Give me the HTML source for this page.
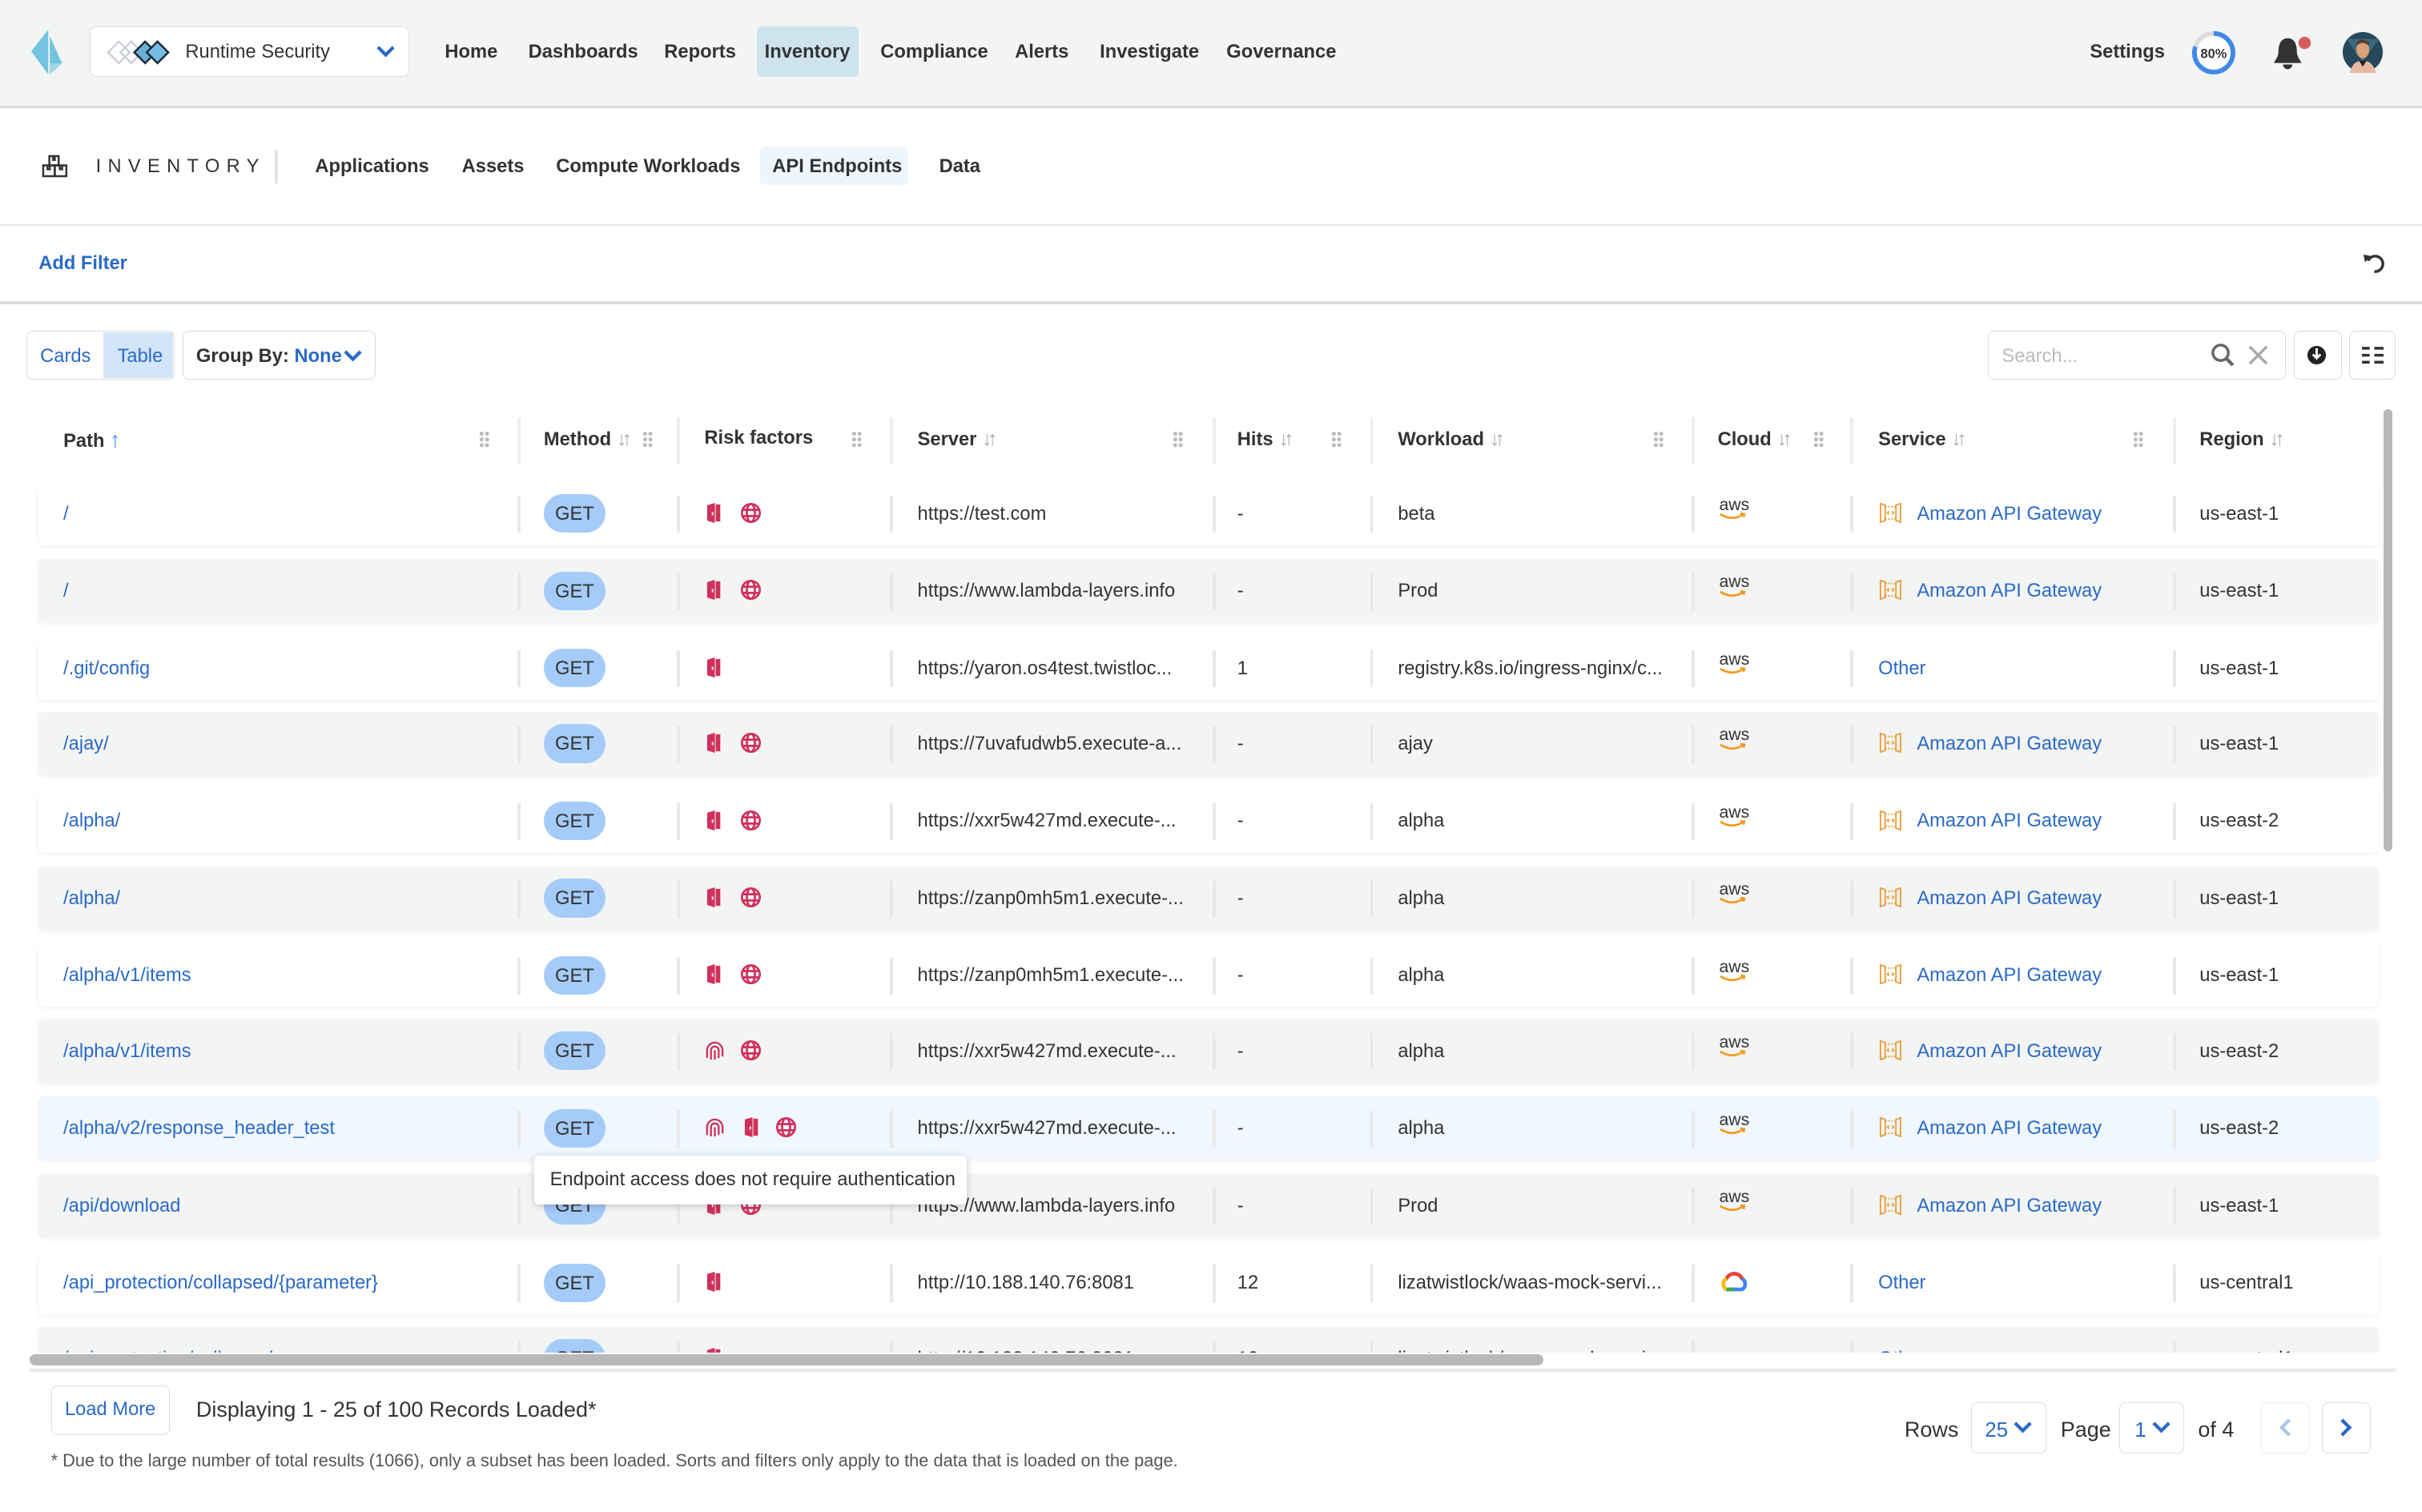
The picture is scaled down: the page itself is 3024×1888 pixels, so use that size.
<!DOCTYPE html>
<html><head><meta charset="utf-8">
<style>
html{zoom:1.92857}
*{box-sizing:border-box;margin:0;padding:0}
body{width:1568px;height:979px;overflow:hidden;background:#fff;font-family:"Liberation Sans",sans-serif;color:#333;font-size:13px;position:relative}
.a{position:absolute}
.top{left:0;top:0;width:1568px;height:70px;background:#f3f5f4;border-bottom:2px solid #dcdcdc}
.nav{top:27px;font-size:12.3px;font-weight:bold;color:#333}
.blue{color:#2a6ac7}
.hb{top:145px;left:0;width:1568px;height:1px;background:#e6e6e6}
.btn{border:1px solid #ddd;border-radius:4px;background:#fff}
.hdr{font-weight:bold;font-size:12.3px;top:277px}
.sort{color:#aaa;font-size:13px;font-weight:normal;letter-spacing:-3px}
.grip{width:7px;height:11px;background:radial-gradient(circle,#bbb 1.2px,transparent 1.4px) 0 0/3.5px 3.7px}
.hsep{width:2px;height:30px;background:#eee;top:270px}
.row{position:absolute;left:25px;width:1515px;height:41px;background:#fff;border-radius:3px;box-shadow:0 1px 3px rgba(0,0,0,.06)}
.row.g{background:#f3f4f4}
.row.h{background:#f0f7fe}
.row span{position:absolute;top:14px;font-size:12.3px;white-space:nowrap}
.row i{position:absolute;top:9px;width:2px;height:24px;background:#e8e8e8}
.get{position:absolute;left:327px;top:8px;width:40px;height:25px;border-radius:13px;background:#a5cbf9;font-size:12.3px;text-align:center;line-height:26px;color:#333}
.ic{position:absolute;top:13px}
.aws{position:absolute;left:1088px;top:10px;font-size:11px;line-height:10px;color:#333}
</style></head><body>
<svg width="0" height="0" style="position:absolute">
<defs>
<symbol id="door" viewBox="0 0 10 14"><path d="M1 2 L6 0.5 V13.5 L1 12 Z" fill="#d0315c"/><path d="M6.5 1.5 H9.5 V12.5 H6.5" fill="#d0315c"/><rect x="4" y="6.5" width="1" height="2" fill="#fff"/></symbol>
<symbol id="globe" viewBox="0 0 14 14"><g fill="none" stroke="#d0315c" stroke-width="1.4"><circle cx="7" cy="7" r="5.8"/><ellipse cx="7" cy="7" rx="2.6" ry="5.8"/><path d="M1.2 5 H12.8 M1.2 9 H12.8"/></g></symbol>
<symbol id="fp" viewBox="0 0 14 14"><g fill="none" stroke="#d0315c" stroke-width="1.2"><path d="M2 12 V7 a5 5 0 0 1 10 0 V11"/><path d="M4.5 13 V7 a2.5 2.5 0 0 1 5 0 V12"/><path d="M7 7 V13"/></g></symbol>
<symbol id="apg" viewBox="0 0 16 16"><g fill="none" stroke="#e8a140" stroke-width="1"><path d="M1.5 2 L4.5 3 V13 L1.5 14 Z M14.5 2 L11.5 3 V13 L14.5 14 Z"/><path d="M4.5 4 H11.5 M4.5 12 H11.5" stroke-dasharray="1 1"/><path d="M7 7 L6 8 L7 9 M9 7 L10 8 L9 9"/></g></symbol>
<symbol id="awsl" viewBox="0 0 18 5"><path d="M1 1 Q9 6 16 1 M14 0.5 L16.5 1 L16 3" fill="none" stroke="#f39a1f" stroke-width="1.4"/></symbol>
</defs></svg>

<div class="a top"></div>
<svg class="a" style="left:20px;top:19px" width="26" height="30" viewBox="0 0 26 30"><path d="M11 0 L0 14 L11 29 Z" fill="#72c4e0"/><path d="M12 4 L20 22 L12 22 Z" fill="#72c4e0"/><path d="M12 22 L20 22 L12 29Z" fill="#9fd6ea"/></svg>
<div class="a btn" style="left:58px;top:17px;width:207px;height:33px"></div>
<svg class="a" style="left:69px;top:25px" width="48" height="18" viewBox="0 0 48 18"><g fill="none" stroke="#c9ced6" stroke-width="1.2"><path d="M8 2 L15 9 L8 16 L1 9Z"/><path d="M16 2 L23 9 L16 16 L9 9Z"/></g><path d="M25 2 L32 9 L25 16 L18 9Z" fill="#6ab0d6" stroke="#1d2b36" stroke-width="1.3"/><path d="M33 2 L40 9 L33 16 L26 9Z" fill="#73bde3" stroke="#1d2b36" stroke-width="1.3"/></svg>
<div class="a" style="left:120px;top:27px;font-size:12.3px">Runtime Security</div>
<svg class="a" style="left:243px;top:29px" width="13" height="9" viewBox="0 0 13 9"><path d="M1.5 1.5 L6.5 6.5 L11.5 1.5" fill="none" stroke="#2a6ac7" stroke-width="2.2"/></svg>
<div class="a nav" style="left:288px">Home</div>
<div class="a nav" style="left:342px">Dashboards</div>
<div class="a nav" style="left:430px">Reports</div>
<div class="a" style="left:490px;top:17px;width:66px;height:33px;background:#cde4ef;border-radius:3px"></div>
<div class="a nav" style="left:495px">Inventory</div>
<div class="a nav" style="left:570px">Compliance</div>
<div class="a nav" style="left:657px">Alerts</div>
<div class="a nav" style="left:712px">Investigate</div>
<div class="a nav" style="left:794px">Governance</div>
<div class="a nav" style="left:1353px">Settings</div>
<svg class="a" style="left:1418px;top:19px" width="30" height="30" viewBox="0 0 30 30"><circle cx="15" cy="15" r="12.5" fill="#fff" stroke="#ddd" stroke-width="3"/><circle cx="15" cy="15" r="12.5" fill="none" stroke="#3f8ae8" stroke-width="3" stroke-dasharray="62.8 78.5" transform="rotate(-90 15 15)"/><text x="15" y="18.5" text-anchor="middle" font-size="8.5" font-weight="bold" font-family="Liberation Sans" fill="#333">80%</text></svg>
<svg class="a" style="left:1471px;top:22px" width="28" height="25" viewBox="0 0 28 25"><path d="M10 3 C5 3 4 8 4 12 C4 15 2 17 1 19 H19 C18 17 16 15 16 12 C16 8 15 3 10 3Z" fill="#333"/><path d="M7 20 H13 A3 3 0 0 1 7 20Z" fill="#333"/><circle cx="21" cy="6" r="4" fill="#d65c5c"/></svg>
<svg class="a" style="left:1516px;top:20px" width="27" height="27" viewBox="0 0 27 27"><circle cx="13.5" cy="13.5" r="13" fill="#27475a"/><path d="M3 5 L13.5 20 L24 5Z" fill="#3a6a80"/><ellipse cx="13.5" cy="12" rx="4.2" ry="5.5" fill="#d9a07a"/><path d="M9 8 Q13 3 18 8 L17 9 Q13 6 10 9Z" fill="#5a3a2a"/><path d="M5 27 Q7 19 13.5 19 Q20 19 22 27Z" fill="#e8b9a0"/><path d="M11 19 L13.5 23 L16 19Z" fill="#222"/></svg>

<svg class="a" style="left:27px;top:100px" width="17" height="15" viewBox="0 0 17 15"><g fill="none" stroke="#333" stroke-width="1.3"><rect x="5" y="1" width="6" height="6"/><rect x="1" y="7" width="7.5" height="7"/><rect x="8.5" y="7" width="7.5" height="7"/><path d="M7.5 1 V3.5 H8.5 V1 M3.8 7 V9.5 H5.3 V7 M11.8 7 V9.5 H13.3 V7"/></g></svg>
<div class="a" style="left:62px;top:101px;font-size:12.3px;letter-spacing:4.3px;color:#333">INVENTORY</div>
<div class="a" style="left:178px;top:97px;width:2px;height:22px;background:#e3e3e3"></div>
<div class="a nav" style="left:204px;top:101px">Applications</div>
<div class="a nav" style="left:299px;top:101px">Assets</div>
<div class="a nav" style="left:360px;top:101px">Compute Workloads</div>
<div class="a" style="left:492px;top:95px;width:96px;height:25px;background:#eef6fd;border-radius:3px"></div>
<div class="a nav" style="left:500px;top:101px">API Endpoints</div>
<div class="a nav" style="left:608px;top:101px">Data</div>
<div class="a hb"></div>
<div class="a" style="left:25px;top:164px;font-weight:bold;font-size:12.3px;color:#2a6ac7">Add Filter</div>
<svg class="a" style="left:1529px;top:163px" width="16" height="16" viewBox="0 0 16 16"><path d="M4 6 A5 5 0 1 1 8 13" fill="none" stroke="#333" stroke-width="1.8"/><path d="M1 2 L6 3 L2 7Z" fill="#333"/></svg>
<div class="a" style="left:0;top:195px;width:1568px;height:2px;background:#ddd"></div>

<div class="a btn" style="left:17px;top:214px;width:96px;height:32px"></div>
<div class="a" style="left:67px;top:215px;width:45px;height:30px;background:#d3e5f8"></div>
<div class="a" style="left:26px;top:224px;color:#2a6ac7;font-size:12.3px">Cards</div>
<div class="a" style="left:76px;top:224px;color:#2a6ac7;font-size:12.3px">Table</div>
<div class="a btn" style="left:118px;top:214px;width:125px;height:32px"></div>
<div class="a" style="left:127px;top:224px;font-size:12.3px;font-weight:bold">Group By: <span class="blue">None</span></div>
<svg class="a" style="left:222px;top:226px" width="13" height="9" viewBox="0 0 13 9"><path d="M1.5 1.5 L6.5 6.5 L11.5 1.5" fill="none" stroke="#2a6ac7" stroke-width="2.2"/></svg>
<div class="a btn" style="left:1287px;top:214px;width:193px;height:32px"></div>
<div class="a" style="left:1296px;top:224px;color:#bbb;font-size:12.3px">Search...</div>
<svg class="a" style="left:1431px;top:222px" width="16" height="16" viewBox="0 0 16 16"><circle cx="6.5" cy="6.5" r="5" fill="none" stroke="#666" stroke-width="1.8"/><path d="M10 10 L14.5 14.5" stroke="#666" stroke-width="2.2"/></svg>
<svg class="a" style="left:1455px;top:223px" width="14" height="14" viewBox="0 0 14 14"><path d="M1.5 1.5 L12.5 12.5 M12.5 1.5 L1.5 12.5" stroke="#aaa" stroke-width="1.8"/></svg>
<div class="a btn" style="left:1485px;top:214px;width:31px;height:32px"></div>
<svg class="a" style="left:1493px;top:223px" width="14" height="14" viewBox="0 0 14 14"><circle cx="7" cy="7" r="6" fill="#222"/><path d="M7 2.5 V8.5 M4.5 6.5 L7 9 L9.5 6.5" stroke="#fff" stroke-width="1.5" fill="none"/></svg>
<div class="a btn" style="left:1521px;top:214px;width:30px;height:32px"></div>
<svg class="a" style="left:1529px;top:224px" width="14" height="12" viewBox="0 0 14 12"><path d="M0 1.5 H5 M8 1.5 H14 M0 6 H5 M8 6 H14 M0 10.5 H5 M8 10.5 H14" stroke="#333" stroke-width="1.8"/></svg>

<div class="a" style="left:0;top:262px;width:1545px;height:614px;overflow:hidden">
<div class="a" style="left:0;top:-262px;width:1545px;height:979px">
<div class="a hdr" style="left:41px">Path <span style="color:#4a90e2;font-size:14px">&#8593;</span></div>
<div class="a grip" style="left:310px;top:279px"></div><div class="a hsep" style="left:335px"></div>
<div class="a hdr" style="left:352px">Method <span class="sort">&#8595;&#8593;</span></div>
<div class="a grip" style="left:416px;top:279px"></div><div class="a hsep" style="left:438px"></div>
<div class="a hdr" style="left:456px">Risk factors</div>
<div class="a grip" style="left:551px;top:279px"></div><div class="a hsep" style="left:576px"></div>
<div class="a hdr" style="left:594px">Server <span class="sort">&#8595;&#8593;</span></div>
<div class="a grip" style="left:759px;top:279px"></div><div class="a hsep" style="left:785px"></div>
<div class="a hdr" style="left:801px">Hits <span class="sort">&#8595;&#8593;</span></div>
<div class="a grip" style="left:862px;top:279px"></div><div class="a hsep" style="left:887px"></div>
<div class="a hdr" style="left:905px">Workload <span class="sort">&#8595;&#8593;</span></div>
<div class="a grip" style="left:1070px;top:279px"></div><div class="a hsep" style="left:1095px"></div>
<div class="a hdr" style="left:1112px">Cloud <span class="sort">&#8595;&#8593;</span></div>
<div class="a grip" style="left:1174px;top:279px"></div><div class="a hsep" style="left:1198px"></div>
<div class="a hdr" style="left:1216px">Service <span class="sort">&#8595;&#8593;</span></div>
<div class="a grip" style="left:1381px;top:279px"></div><div class="a hsep" style="left:1407px"></div>
<div class="a hdr" style="left:1424px">Region <span class="sort">&#8595;&#8593;</span></div>

<div class="row" style="top:312px"><span class="blue" style="left:16px">/</span><i style="left:310px"></i><div class="get">GET</div><i style="left:413px"></i><svg class="ic" style="left:432px" width="10" height="14"><use href="#door"/></svg><svg class="ic" style="left:454px" width="14" height="14"><use href="#globe"/></svg><i style="left:551px"></i><span style="left:569px">https://test.com</span><i style="left:760px"></i><span style="left:776px">-</span><i style="left:862px"></i><span style="left:880px">beta</span><i style="left:1070px"></i><div class="aws">aws<svg width="18" height="5" style="display:block"><use href="#awsl"/></svg></div><i style="left:1173px"></i><svg class="ic" style="left:1191px;top:12px" width="16" height="16"><use href="#apg"/></svg><span class="blue" style="left:1216px">Amazon API Gateway</span><i style="left:1382px"></i><span style="left:1399px">us-east-1</span></div>

<div class="row g" style="top:362px"><span class="blue" style="left:16px">/</span><i style="left:310px"></i><div class="get">GET</div><i style="left:413px"></i><svg class="ic" style="left:432px" width="10" height="14"><use href="#door"/></svg><svg class="ic" style="left:454px" width="14" height="14"><use href="#globe"/></svg><i style="left:551px"></i><span style="left:569px">https://www.lambda-layers.info</span><i style="left:760px"></i><span style="left:776px">-</span><i style="left:862px"></i><span style="left:880px">Prod</span><i style="left:1070px"></i><div class="aws">aws<svg width="18" height="5" style="display:block"><use href="#awsl"/></svg></div><i style="left:1173px"></i><svg class="ic" style="left:1191px;top:12px" width="16" height="16"><use href="#apg"/></svg><span class="blue" style="left:1216px">Amazon API Gateway</span><i style="left:1382px"></i><span style="left:1399px">us-east-1</span></div>

<div class="row" style="top:412px"><span class="blue" style="left:16px">/.git/config</span><i style="left:310px"></i><div class="get">GET</div><i style="left:413px"></i><svg class="ic" style="left:432px" width="10" height="14"><use href="#door"/></svg><i style="left:551px"></i><span style="left:569px">https://yaron.os4test.twistloc...</span><i style="left:760px"></i><span style="left:776px">1</span><i style="left:862px"></i><span style="left:880px">registry.k8s.io/ingress-nginx/c...</span><i style="left:1070px"></i><div class="aws">aws<svg width="18" height="5" style="display:block"><use href="#awsl"/></svg></div><i style="left:1173px"></i><span class="blue" style="left:1191px">Other</span><i style="left:1382px"></i><span style="left:1399px">us-east-1</span></div>

<div class="row g" style="top:461px"><span class="blue" style="left:16px">/ajay/</span><i style="left:310px"></i><div class="get">GET</div><i style="left:413px"></i><svg class="ic" style="left:432px" width="10" height="14"><use href="#door"/></svg><svg class="ic" style="left:454px" width="14" height="14"><use href="#globe"/></svg><i style="left:551px"></i><span style="left:569px">https://7uvafudwb5.execute-a...</span><i style="left:760px"></i><span style="left:776px">-</span><i style="left:862px"></i><span style="left:880px">ajay</span><i style="left:1070px"></i><div class="aws">aws<svg width="18" height="5" style="display:block"><use href="#awsl"/></svg></div><i style="left:1173px"></i><svg class="ic" style="left:1191px;top:12px" width="16" height="16"><use href="#apg"/></svg><span class="blue" style="left:1216px">Amazon API Gateway</span><i style="left:1382px"></i><span style="left:1399px">us-east-1</span></div>

<div class="row" style="top:511px"><span class="blue" style="left:16px">/alpha/</span><i style="left:310px"></i><div class="get">GET</div><i style="left:413px"></i><svg class="ic" style="left:432px" width="10" height="14"><use href="#door"/></svg><svg class="ic" style="left:454px" width="14" height="14"><use href="#globe"/></svg><i style="left:551px"></i><span style="left:569px">https://xxr5w427md.execute-...</span><i style="left:760px"></i><span style="left:776px">-</span><i style="left:862px"></i><span style="left:880px">alpha</span><i style="left:1070px"></i><div class="aws">aws<svg width="18" height="5" style="display:block"><use href="#awsl"/></svg></div><i style="left:1173px"></i><svg class="ic" style="left:1191px;top:12px" width="16" height="16"><use href="#apg"/></svg><span class="blue" style="left:1216px">Amazon API Gateway</span><i style="left:1382px"></i><span style="left:1399px">us-east-2</span></div>

<div class="row g" style="top:561px"><span class="blue" style="left:16px">/alpha/</span><i style="left:310px"></i><div class="get">GET</div><i style="left:413px"></i><svg class="ic" style="left:432px" width="10" height="14"><use href="#door"/></svg><svg class="ic" style="left:454px" width="14" height="14"><use href="#globe"/></svg><i style="left:551px"></i><span style="left:569px">https://zanp0mh5m1.execute-...</span><i style="left:760px"></i><span style="left:776px">-</span><i style="left:862px"></i><span style="left:880px">alpha</span><i style="left:1070px"></i><div class="aws">aws<svg width="18" height="5" style="display:block"><use href="#awsl"/></svg></div><i style="left:1173px"></i><svg class="ic" style="left:1191px;top:12px" width="16" height="16"><use href="#apg"/></svg><span class="blue" style="left:1216px">Amazon API Gateway</span><i style="left:1382px"></i><span style="left:1399px">us-east-1</span></div>

<div class="row" style="top:611px"><span class="blue" style="left:16px">/alpha/v1/items</span><i style="left:310px"></i><div class="get">GET</div><i style="left:413px"></i><svg class="ic" style="left:432px" width="10" height="14"><use href="#door"/></svg><svg class="ic" style="left:454px" width="14" height="14"><use href="#globe"/></svg><i style="left:551px"></i><span style="left:569px">https://zanp0mh5m1.execute-...</span><i style="left:760px"></i><span style="left:776px">-</span><i style="left:862px"></i><span style="left:880px">alpha</span><i style="left:1070px"></i><div class="aws">aws<svg width="18" height="5" style="display:block"><use href="#awsl"/></svg></div><i style="left:1173px"></i><svg class="ic" style="left:1191px;top:12px" width="16" height="16"><use href="#apg"/></svg><span class="blue" style="left:1216px">Amazon API Gateway</span><i style="left:1382px"></i><span style="left:1399px">us-east-1</span></div>

<div class="row g" style="top:660px"><span class="blue" style="left:16px">/alpha/v1/items</span><i style="left:310px"></i><div class="get">GET</div><i style="left:413px"></i><svg class="ic" style="left:431px" width="14" height="14"><use href="#fp"/></svg><svg class="ic" style="left:454px" width="14" height="14"><use href="#globe"/></svg><i style="left:551px"></i><span style="left:569px">https://xxr5w427md.execute-...</span><i style="left:760px"></i><span style="left:776px">-</span><i style="left:862px"></i><span style="left:880px">alpha</span><i style="left:1070px"></i><div class="aws">aws<svg width="18" height="5" style="display:block"><use href="#awsl"/></svg></div><i style="left:1173px"></i><svg class="ic" style="left:1191px;top:12px" width="16" height="16"><use href="#apg"/></svg><span class="blue" style="left:1216px">Amazon API Gateway</span><i style="left:1382px"></i><span style="left:1399px">us-east-2</span></div>

<div class="row h" style="top:710px"><span class="blue" style="left:16px">/alpha/v2/response_header_test</span><i style="left:310px"></i><div class="get">GET</div><i style="left:413px"></i><svg class="ic" style="left:431px" width="14" height="14"><use href="#fp"/></svg><svg class="ic" style="left:456px" width="10" height="14"><use href="#door"/></svg><svg class="ic" style="left:477px" width="14" height="14"><use href="#globe"/></svg><i style="left:551px"></i><span style="left:569px">https://xxr5w427md.execute-...</span><i style="left:760px"></i><span style="left:776px">-</span><i style="left:862px"></i><span style="left:880px">alpha</span><i style="left:1070px"></i><div class="aws">aws<svg width="18" height="5" style="display:block"><use href="#awsl"/></svg></div><i style="left:1173px"></i><svg class="ic" style="left:1191px;top:12px" width="16" height="16"><use href="#apg"/></svg><span class="blue" style="left:1216px">Amazon API Gateway</span><i style="left:1382px"></i><span style="left:1399px">us-east-2</span></div>

<div class="row g" style="top:760px"><span class="blue" style="left:16px">/api/download</span><i style="left:310px"></i><div class="get">GET</div><i style="left:413px"></i><svg class="ic" style="left:432px" width="10" height="14"><use href="#door"/></svg><svg class="ic" style="left:454px" width="14" height="14"><use href="#globe"/></svg><i style="left:551px"></i><span style="left:569px">https://www.lambda-layers.info</span><i style="left:760px"></i><span style="left:776px">-</span><i style="left:862px"></i><span style="left:880px">Prod</span><i style="left:1070px"></i><div class="aws">aws<svg width="18" height="5" style="display:block"><use href="#awsl"/></svg></div><i style="left:1173px"></i><svg class="ic" style="left:1191px;top:12px" width="16" height="16"><use href="#apg"/></svg><span class="blue" style="left:1216px">Amazon API Gateway</span><i style="left:1382px"></i><span style="left:1399px">us-east-1</span></div>

<div class="row" style="top:810px"><span class="blue" style="left:16px">/api_protection/collapsed/{parameter}</span><i style="left:310px"></i><div class="get">GET</div><i style="left:413px"></i><svg class="ic" style="left:432px" width="10" height="14"><use href="#door"/></svg><i style="left:551px"></i><span style="left:569px">http://10.188.140.76:8081</span><i style="left:760px"></i><span style="left:776px">12</span><i style="left:862px"></i><span style="left:880px">lizatwistlock/waas-mock-servi...</span><i style="left:1070px"></i><svg class="ic" style="left:1089px;top:12px" width="18" height="16" viewBox="0 0 18 16"><path d="M4 13 A4 4 0 0 1 4 6 A5.5 5.5 0 0 1 14 6 A4 4 0 0 1 14 13 Z" fill="none" stroke="#4285f4" stroke-width="2.4"/><path d="M4 6 A5.5 5.5 0 0 1 14 6" fill="none" stroke="#ea4335" stroke-width="2.4"/><path d="M4 13 A4 4 0 0 1 4 6" fill="none" stroke="#fbbc05" stroke-width="2.4"/><path d="M4 13 H9" stroke="#34a853" stroke-width="2.4"/></svg><i style="left:1173px"></i><span class="blue" style="left:1191px">Other</span><i style="left:1382px"></i><span style="left:1399px">us-central1</span></div>

<div class="row g" style="top:859px"><span class="blue" style="left:16px">/api_protection/collapsed</span><i style="left:310px"></i><div class="get">GET</div><i style="left:413px"></i><svg class="ic" style="left:432px" width="10" height="14"><use href="#door"/></svg><i style="left:551px"></i><span style="left:569px">http://10.188.140.76:8081</span><i style="left:760px"></i><span style="left:776px">12</span><i style="left:862px"></i><span style="left:880px">lizatwistlock/waas-mock-servi...</span><i style="left:1070px"></i><i style="left:1173px"></i><span class="blue" style="left:1191px">Other</span><i style="left:1382px"></i><span style="left:1399px">us-central1</span></div>
</div>
</div>

<div class="a" style="left:346px;top:748px;width:280px;height:32px;background:#fff;border-radius:3px;box-shadow:0 1px 5px rgba(0,0,0,.2);font-size:12.3px;padding:9px 0 0 10px;white-space:nowrap">Endpoint access does not require authentication</div>

<div class="a" style="left:1543px;top:265px;width:6px;height:286px;background:#b8b8b8;border-radius:3px"></div>
<div class="a" style="left:19px;top:877px;width:980px;height:7px;background:#b8b8b8;border-radius:4px"></div>
<div class="a" style="left:19px;top:886px;width:1532px;height:2px;background:#e8e8e8"></div>

<div class="a btn" style="left:33px;top:897px;width:77px;height:32px"></div>
<div class="a" style="left:42px;top:906px;color:#2a6ac7;font-size:12.3px">Load More</div>
<div class="a" style="left:127px;top:905px;font-size:14px">Displaying 1 - 25 of 100 Records Loaded*</div>
<div class="a" style="left:33px;top:939px;font-size:11.3px;color:#555">* Due to the large number of total results (1066), only a subset has been loaded. Sorts and filters only apply to the data that is loaded on the page.</div>

<div class="a" style="left:1233px;top:918px;font-size:14px">Rows</div>
<div class="a btn" style="left:1276px;top:908px;width:49px;height:33px"></div>
<div class="a" style="left:1285px;top:918px;font-size:13.5px;color:#2a6ac7">25</div>
<svg class="a" style="left:1303px;top:920px" width="13" height="9" viewBox="0 0 13 9"><path d="M1.5 1.5 L6.5 6.5 L11.5 1.5" fill="none" stroke="#2a6ac7" stroke-width="2.2"/></svg>
<div class="a" style="left:1334px;top:918px;font-size:14px">Page</div>
<div class="a btn" style="left:1372px;top:908px;width:42px;height:33px"></div>
<div class="a" style="left:1382px;top:918px;font-size:13.5px;color:#2a6ac7">1</div>
<svg class="a" style="left:1393px;top:920px" width="13" height="9" viewBox="0 0 13 9"><path d="M1.5 1.5 L6.5 6.5 L11.5 1.5" fill="none" stroke="#2a6ac7" stroke-width="2.2"/></svg>
<div class="a" style="left:1423px;top:918px;font-size:14px">of 4</div>
<div class="a" style="left:1464px;top:908px;width:31px;height:33px;border:1px solid #eee;border-radius:4px"></div>
<svg class="a" style="left:1475px;top:918px" width="9" height="13" viewBox="0 0 9 13"><path d="M7 1.5 L2 6.5 L7 11.5" fill="none" stroke="#aac6ec" stroke-width="2.2"/></svg>
<div class="a btn" style="left:1503px;top:908px;width:32px;height:33px"></div>
<svg class="a" style="left:1514px;top:918px" width="9" height="13" viewBox="0 0 9 13"><path d="M2 1.5 L7 6.5 L2 11.5" fill="none" stroke="#2a6ac7" stroke-width="2.2"/></svg>
</body></html>
